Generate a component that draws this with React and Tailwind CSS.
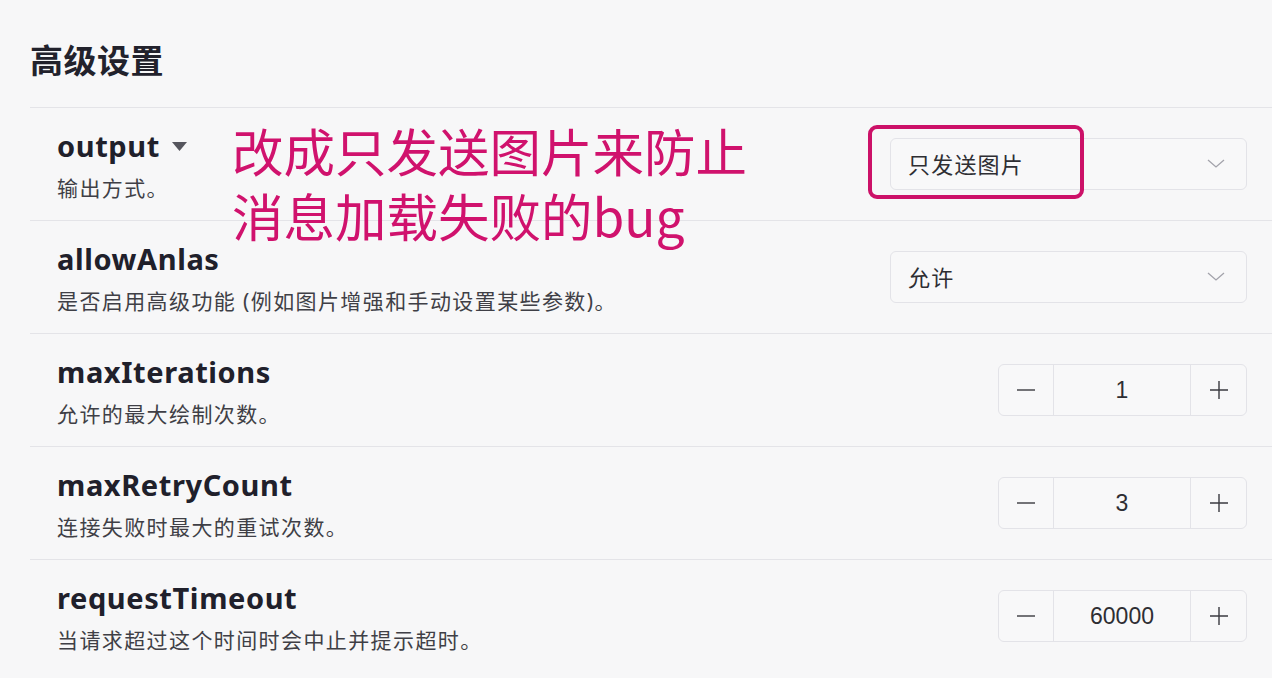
import React from "react";

const font = { fontFamily: '"Noto Sans", "Noto Sans CJK SC", sans-serif' };

const rows = [
  { key: "output", desc: "输出方式。", type: "select", value: "只发送图片", caret: true },
  { key: "allowAnlas", desc: "是否启用高级功能 (例如图片增强和手动设置某些参数)。", type: "select", value: "允许" },
  { key: "maxIterations", desc: "允许的最大绘制次数。", type: "number", value: "1" },
  { key: "maxRetryCount", desc: "连接失败时最大的重试次数。", type: "number", value: "3" },
  { key: "requestTimeout", desc: "当请求超过这个时间时会中止并提示超时。", type: "number", value: "60000" },
];

function Chevron() {
  return (
    <svg width="18" height="10" viewBox="0 0 18 10" fill="none">
      <path d="M1 1l8 7 8-7" stroke="#a3a3ab" strokeWidth="1.3" />
    </svg>
  );
}

function SelectBox({ value }) {
  return (
    <div className="w-[357px] h-[52px] flex items-center justify-between pl-[17px] pr-[21px] rounded-md border border-[#e3e3e8] bg-[#f8f8f9]">
      <span className="text-[22px] tracking-[1.2px] text-[#2e2e33]">{value}</span>
      <Chevron />
    </div>
  );
}

function NumberBox({ value }) {
  return (
    <div className="w-[249px] h-[52px] flex rounded-md border border-[#e3e3e8] bg-[#f8f8f9]">
      <div className="w-[55px] flex items-center justify-center border-r border-[#e3e3e8]">
        <svg width="18" height="18" viewBox="0 0 18 18">
          <path d="M0 9h18" stroke="#3a3a40" strokeWidth="1.4" />
        </svg>
      </div>
      <div className="flex-1 flex items-center justify-center text-[23px] text-[#2e2e33]" style={{ fontFamily: '"Liberation Sans", sans-serif' }}>
        {value}
      </div>
      <div className="w-[56px] flex items-center justify-center border-l border-[#e3e3e8]">
        <svg width="18" height="18" viewBox="0 0 18 18">
          <path d="M0 9h18M9 0v18" stroke="#3a3a40" strokeWidth="1.4" />
        </svg>
      </div>
    </div>
  );
}

function Row({ row }) {
  return (
    <div className="flex items-center justify-between border-t border-[#e4e4e8] pl-[27px] pr-[25px] h-[113px]">
      <div className="pt-[2px]">
        <div className="flex items-center gap-[12px] h-[36px]">
          <span className="text-[29px] tracking-[0.6px] font-bold text-[#20202b] leading-[36px]">{row.key}</span>
          {row.caret && (
            <svg width="15" height="9" viewBox="0 0 15 9">
              <path d="M0 0h15L7.5 9z" fill="#56565e" />
            </svg>
          )}
        </div>
        <div className="mt-[10px] text-[21px] tracking-[1.4px] leading-[28px] text-[#3f3f46]">{row.desc}</div>
      </div>
      {row.type === "select" ? <SelectBox value={row.value} /> : <NumberBox value={row.value} />}
    </div>
  );
}

export default function App() {
  return (
    <div className="flex w-full min-h-screen bg-white overflow-hidden" style={font}>
      <div className="relative w-[1272px] shrink-0 bg-[#f7f7f8] pl-[30px] h-[678px]">
        <h2 className="pt-[37px] mb-[22px] text-[33px] tracking-[0.5px] leading-[48px] font-bold text-[#22222c]">高级设置</h2>
        {rows.map((r) => (
          <Row key={r.key} row={r} />
        ))}

        {/* annotation overlay */}
        <div className="absolute left-[232px] top-[117px] text-[51.5px] leading-[65px] text-[#d0126d]" style={{ fontFamily: '"Noto Sans CJK SC", "Noto Sans", sans-serif' }}>
          <div>改成只发送图片来防止</div>
          <div>消息加载失败的bug</div>
        </div>
        <div className="absolute left-[868px] top-[125px] w-[216px] h-[74px] rounded-[9px] border-[4px] border-[#cc1168]" />
      </div>
      <div className="flex-1 bg-white" />
    </div>
  );
}
